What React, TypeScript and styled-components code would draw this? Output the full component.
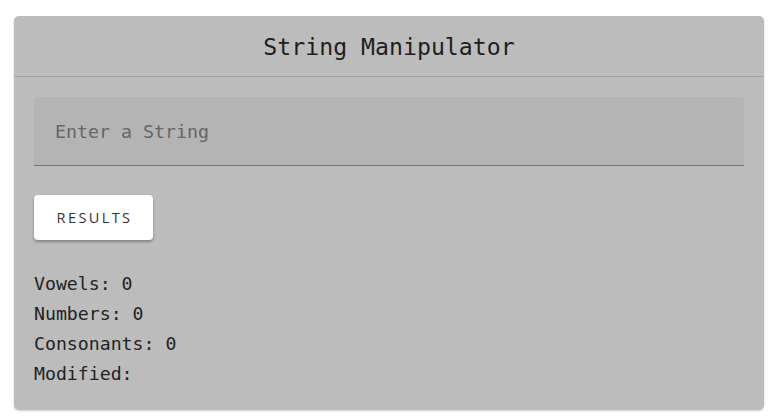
import React, { useState } from 'react';
import styled, { createGlobalStyle } from 'styled-components';

const GlobalStyle = createGlobalStyle`
  html, body {
    margin: 0;
    padding: 0;
    background: #ffffff;
  }
  body {
    font-family: "DejaVu Sans Mono", "Liberation Mono", monospace;
  }
`;

const Page = styled.div`
  padding: 16px 13px 8px 14px;
`;

const Card = styled.div`
  background: #bcbcbc;
  border-radius: 5px;
  box-shadow: 0 1px 2px rgba(0, 0, 0, 0.2);
  min-height: 394px;
  box-sizing: border-box;
`;

const Header = styled.div`
  height: 60px;
  border-bottom: 1px solid #a4a4a4;
  display: flex;
  align-items: center;
  justify-content: center;
`;

const Title = styled.h1`
  margin: 0;
  font-family: "DejaVu Sans Mono", monospace;
  font-weight: normal;
  font-size: 23.2px;
  color: #1e1e1e;
`;

const Body = styled.div`
  padding: 20px 20px 20px 20px;
  display: flex;
  flex-direction: column;
`;

const Field = styled.input`
  height: 69px;
  box-sizing: border-box;
  background: #b4b4b4;
  border: none;
  border-bottom: 1px solid #767676;
  border-radius: 4px 4px 0 0;
  padding: 0 21px;
  font-family: "DejaVu Sans Mono", monospace;
  font-size: 18.3px;
  color: #222;
  outline: none;

  &::placeholder {
    color: #666;
  }
`;

const Button = styled.button`
  align-self: flex-start;
  margin-top: 29px;
  width: 119px;
  height: 45px;
  background: #ffffff;
  border: none;
  border-radius: 4px;
  box-shadow: 0 2px 3px rgba(0, 0, 0, 0.3);
  font-family: "Open Sans", "Noto Sans", sans-serif;
  font-size: 14.5px;
  letter-spacing: 2.4px;
  padding: 0 0 0 2px;
  color: #333;
  cursor: pointer;
`;

const Results = styled.div`
  margin-top: 29px;
  display: flex;
  flex-direction: column;
`;

const Line = styled.div`
  font-family: "DejaVu Sans Mono", monospace;
  font-size: 18.2px;
  line-height: 30px;
  color: #222;
`;

const VOWELS = 'aeiou';

export default function App() {
  const [text, setText] = useState('');
  const [result, setResult] = useState({ vowels: 0, numbers: 0, consonants: 0, modified: '' });

  const compute = () => {
    let vowels = 0;
    let numbers = 0;
    let consonants = 0;
    for (const ch of text.toLowerCase()) {
      if (VOWELS.includes(ch)) vowels++;
      else if (/[0-9]/.test(ch)) numbers++;
      else if (/[a-z]/.test(ch)) consonants++;
    }
    setResult({ vowels, numbers, consonants, modified: text.split('').reverse().join('') });
  };

  return (
    <>
      <GlobalStyle />
      <Page>
        <Card>
          <Header>
            <Title>String Manipulator</Title>
          </Header>
          <Body>
            <Field placeholder="Enter a String" value={text} onChange={(e) => setText(e.target.value)} />
            <Button onClick={compute}>RESULTS</Button>
            <Results>
              <Line>Vowels: {result.vowels}</Line>
              <Line>Numbers: {result.numbers}</Line>
              <Line>Consonants: {result.consonants}</Line>
              <Line>Modified: {result.modified}</Line>
            </Results>
          </Body>
        </Card>
      </Page>
    </>
  );
}
